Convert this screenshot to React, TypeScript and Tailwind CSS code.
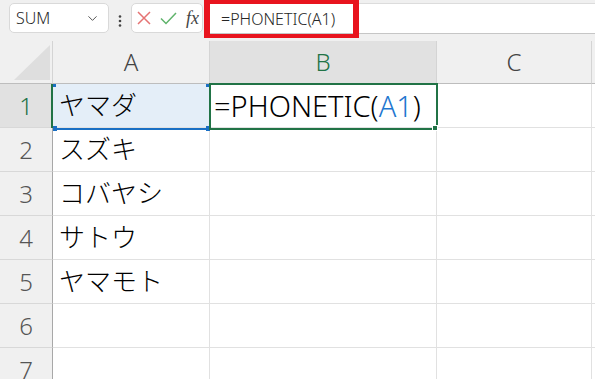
import React from 'react';
import { ChevronDown } from 'lucide-react';

const names = ['ヤマダ', 'スズキ', 'コバヤシ', 'サトウ', 'ヤマモト', '', ''];

export default function App() {
  return (
    <div className="relative w-[595px] h-[379px] overflow-hidden bg-white font-['Noto_Sans','Noto_Sans_CJK_JP',sans-serif]">
      {/* formula bar */}
      <div className="flex h-[41px] bg-[#f0f0f0]">
        <div className="ml-[9px] mt-[3px] flex h-[30px] w-[100px] items-center justify-between rounded-[5px] border border-[#d9d9d9] bg-white pl-[6px] pr-[8px]">
          <span className="text-[16px] font-light text-[#262626]">SUM</span>
          <ChevronDown size={15} strokeWidth={1.6} className="text-[#555]" />
        </div>
        <div className="flex w-[22px] items-center justify-center">
          <svg width="4" height="12" viewBox="0 0 4 12">
            <circle cx="2" cy="1.5" r="1.3" fill="#444" />
            <circle cx="2" cy="6" r="1.3" fill="#444" />
            <circle cx="2" cy="10.5" r="1.3" fill="#444" />
          </svg>
        </div>
        <div className="mt-[3px] flex h-[30px] w-[72px] items-center gap-[9px] rounded-[5px] border border-[#d9d9d9] bg-white pl-[5px]">
          <svg width="14" height="14" viewBox="0 0 14 14">
            <path d="M1 1 L13 13 M13 1 L1 13" stroke="#e57373" strokeWidth="1.5" fill="none" />
          </svg>
          <svg width="17" height="13" viewBox="0 0 17 13">
            <path d="M1 6.5 L6 11.5 L16 1" stroke="#5fb36b" strokeWidth="1.5" fill="none" />
          </svg>
          <span className="font-['Liberation_Serif',serif] text-[18px] italic leading-none text-[#444]">fx</span>
        </div>
        <div className="ml-px mt-[3px] flex h-[31px] flex-1 items-center border-y border-t-[#dcdcdc] border-b-[#c6c6c6] bg-white pl-[17px]">
          <span className="text-[16px] font-light text-[#262626]">=PHONETIC(A1)</span>
        </div>
      </div>

      {/* sheet */}
      <div className="grid grid-cols-[53px_157px_227px_155px_1fr] grid-rows-[43px_repeat(7,44px)]">
        <div className="relative border-b border-r border-b-[#bdbdbd] border-r-[#d4d4d4] bg-[#f0f0f0]">
          <svg className="absolute left-0 top-0" width="52" height="42" viewBox="0 0 52 42">
            <polygon points="50,4 50,39 14,39" fill="#dedede" />
          </svg>
        </div>
        <div className="flex items-center justify-center border-b border-r border-b-[#bdbdbd] border-r-[#d4d4d4] bg-[#f0f0f0] text-[24px] font-light text-[#444]">A</div>
        <div className="flex items-center justify-center border-b border-r border-b-[#bdbdbd] border-r-[#d4d4d4] bg-[#e1e1e1] text-[24px] font-light text-[#217346]">B</div>
        <div className="flex items-center justify-center border-b border-r border-b-[#bdbdbd] border-r-[#d4d4d4] bg-[#f0f0f0] text-[24px] font-light text-[#444]">C</div>
        <div className="border-b border-b-[#bdbdbd] bg-[#f0f0f0]" />

        {names.map((name, i) => (
          <React.Fragment key={i}>
            <div
              className={`flex items-center justify-center border-b border-r border-b-[#d8d8d8] border-r-[#a8a8a8] text-[24px] font-light ${
                i === 0 ? 'bg-[#e1e1e1] text-[#217346]' : 'bg-[#f0f0f0] text-[#555]'
              }`}
            >
              {i + 1}
            </div>
            <div
              className={`flex items-center border-b border-r border-[#e1e1e1] pl-[6px] text-[26px] font-light text-black ${
                i === 0 ? 'bg-[#e4eef8]' : ''
              }`}
            >
              {name}
            </div>
            <div className="flex items-center border-b border-r border-[#e1e1e1] pl-[4px] text-[29px] font-light text-black">
              {i === 0 && (
                <span>
                  =PHONETIC(<span className="text-[#1f77d0]">A1</span>)
                </span>
              )}
            </div>
            <div className="border-b border-r border-[#e1e1e1]" />
            <div className="border-b border-[#e1e1e1]" />
          </React.Fragment>
        ))}
      </div>

      {/* row 1 header selection line */}
      <div className="absolute left-[51px] top-[84px] h-[44px] w-[2px] bg-[#217346]" />

      {/* A1 reference highlight */}
      <div className="absolute left-[53px] top-[128px] h-[2px] w-[156px] bg-[#1a6fc4]" />
      <div className="absolute left-[53px] top-[84px] h-[3px] w-[3px] bg-[#1a6fc4]" />
      <div className="absolute left-[206px] top-[84px] h-[3px] w-[3px] bg-[#1a6fc4]" />
      <div className="absolute left-[53px] top-[126px] h-[5px] w-[4px] bg-[#1a6fc4]" />
      <div className="absolute left-[206px] top-[126px] h-[5px] w-[4px] bg-[#1a6fc4]" />

      {/* B1 active cell */}
      <div className="absolute left-[209px] top-[83px] h-[47px] w-[229px] border-2 border-[#217346]" />
      <div className="absolute left-[432px] top-[125px] h-[6px] w-[6px] border border-white bg-[#217346]" />

      {/* annotation */}
      <div className="absolute left-[204px] top-0 h-[38px] w-[155px] border-x-[6px] border-y-[4px] border-[#e8141e]" />
    </div>
  );
}
